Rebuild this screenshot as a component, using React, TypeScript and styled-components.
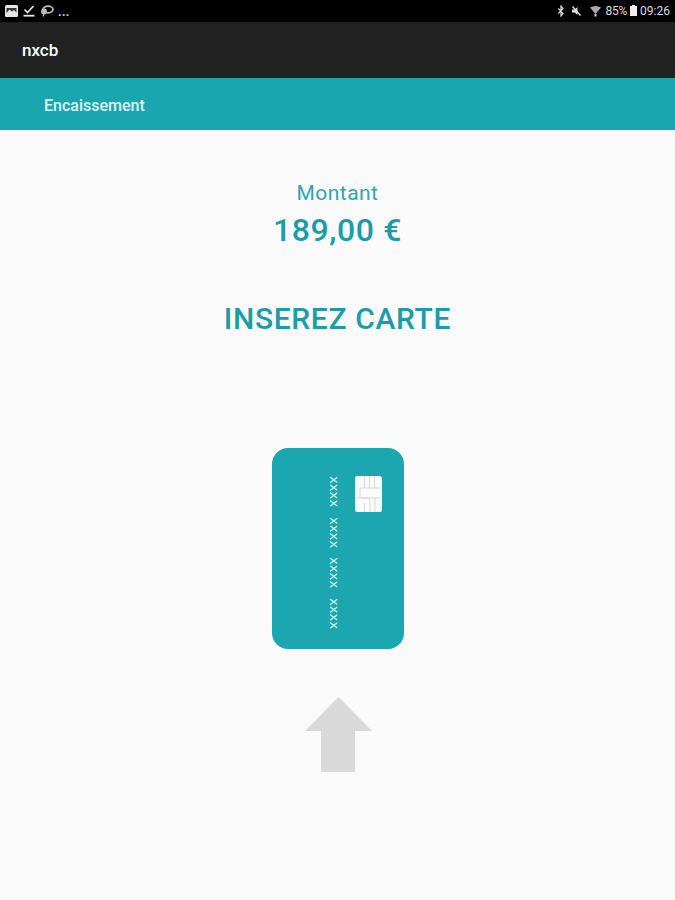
import styled, {createGlobalStyle} from 'styled-components';

const GlobalStyle = createGlobalStyle`
  html, body {
    margin: 0;
    padding: 0;
    background: #fafafa;
  }
  body {
    font-family: Roboto, "Liberation Sans", sans-serif;
  }
`;

const Page = styled.div`
  width: 675px;
  height: 900px;
  display: flex;
  flex-direction: column;
  overflow: hidden;
  background: #fafafa;
`;

const StatusBar = styled.div`
  height: 22px;
  flex: none;
  background: #000;
  color: #dcdcdc;
  display: flex;
  align-items: center;
  justify-content: space-between;
  padding: 0 5px 1px 5px;
  box-sizing: border-box;
  font-size: 12px;
`;

const StatusGroup = styled.div<{$gap: number}>`
  display: flex;
  align-items: center;
  gap: ${p => p.$gap}px;
`;

const Glyph = styled.svg<{$after?: number}>`
  display: block;
  margin-right: ${p => p.$after || 0}px;
`;

const Dots = styled.span`
  font-size: 12px;
  font-weight: 700;
  letter-spacing: 0.4px;
  color: #ddd;
  margin: 2px 0 0 -1px;
`;

const Battery = styled.span`
  letter-spacing: -0.2px;
  margin-left: 1px;
`;

const Toolbar = styled.div`
  height: 56px;
  flex: none;
  background: #212121;
  color: #fff;
  display: flex;
  align-items: center;
  padding-left: 22px;
  font-size: 17px;
  font-weight: 500;
`;

const TabBar = styled.div`
  height: 52px;
  flex: none;
  background: #1aa6af;
  color: #dff4f5;
  display: flex;
  align-items: center;
  padding: 2px 0 0 44px;
  box-sizing: border-box;
  font-size: 16px;
  font-weight: 500;
`;

const Main = styled.main`
  flex: 1;
  display: flex;
  flex-direction: column;
  align-items: center;
  padding-top: 51px;
  color: #1b9ca6;
`;

const Label = styled.div`
  font-size: 21px;
  line-height: 24px;
  letter-spacing: 0.45px;
  color: #2fa6af;
`;

const Amount = styled.div`
  font-size: 32px;
  line-height: 36px;
  font-weight: 500;
  margin-top: 7px;
  letter-spacing: 0.6px;
`;

const Prompt = styled.div`
  font-size: 30px;
  line-height: 36px;
  font-weight: 500;
  margin-top: 53px;
  letter-spacing: 0.65px;
`;

const Card = styled.div`
  width: 132px;
  height: 201px;
  margin-top: 111px;
  box-sizing: border-box;
  background: #1ca6af;
  border-radius: 16px;
  display: flex;
  justify-content: flex-end;
  align-items: flex-start;
  gap: 16px;
  padding: 28px 22px 0 0;
`;

const CardNumber = styled.div`
  writing-mode: vertical-rl;
  color: #eef9fa;
  font-family: "Liberation Mono", monospace;
  font-size: 13px;
  line-height: 11px;
  height: 153px;
  display: flex;
  justify-content: space-between;
`;

const Arrow = styled.svg`
  margin: 48px 0 0 1px;
  display: block;
`;

const App = () => {
  return (
    <Page>
      <GlobalStyle/>
      <StatusBar>
        <StatusGroup $gap={5}>
          <Glyph width="13" height="12" viewBox="0 0 13 12">
            <rect width="13" height="12" rx="1.5" fill="#e6e6e6"/>
            <path d="M1.5 8 L4.5 4.5 L7 6.5 L9 5 L11.5 7.5 V3 H1.5Z" fill="#333"/>
          </Glyph>
          <Glyph width="12" height="12" viewBox="0 0 12 12">
            <path d="M1.5 4.5 L4.5 7.5 L10.5 1" fill="none" stroke="#e6e6e6" strokeWidth="1.7"/>
            <rect x="0.5" y="9.8" width="11" height="1.8" fill="#e6e6e6"/>
          </Glyph>
          <Glyph width="14" height="12" viewBox="0 0 14 12">
            <ellipse cx="8" cy="4.5" rx="5" ry="3.3" fill="none" stroke="#bbb" strokeWidth="1.7"/>
            <circle cx="4" cy="6.5" r="3" fill="#bbb"/>
            <path d="M4 9 L3 11.5" stroke="#bbb" strokeWidth="1.2"/>
          </Glyph>
          <Dots>...</Dots>
        </StatusGroup>
        <StatusGroup $gap={3}>
          <Glyph $after={5} width="6" height="12" viewBox="0 0 6 12">
            <path d="M0.3 3.5 L5 8.5 L3 11 V1 L5 3.5 L0.3 8.5" fill="none" stroke="#ddd" strokeWidth="1.2"/>
          </Glyph>
          <Glyph $after={6} width="9" height="12" viewBox="0 0 9 12">
            <path d="M0 4.5 H2.5 L5.5 2 V10 L2.5 7.5 H0Z" fill="#ddd"/>
            <path d="M0.5 1.5 L8.5 10.5" stroke="#ddd" strokeWidth="1.4"/>
          </Glyph>
          <Glyph width="11" height="12" viewBox="0 0 11 12">
            <path d="M0 2.5 Q5.5 -0.5 11 2.5 L5.5 9Z" fill="#aaa"/>
            <rect x="4.5" y="9" width="2" height="2.5" fill="#ddd"/>
          </Glyph>
          <Battery>85%</Battery>
          <Glyph width="7" height="11" viewBox="0 0 7 11">
            <rect x="0" y="1" width="7" height="10" fill="#eee"/>
            <rect x="2" y="0" width="3" height="1" fill="#eee"/>
          </Glyph>
          <span>09:26</span>
        </StatusGroup>
      </StatusBar>
      <Toolbar>nxcb</Toolbar>
      <TabBar>Encaissement</TabBar>
      <Main>
        <Label>Montant</Label>
        <Amount>189,00 €</Amount>
        <Prompt>INSEREZ CARTE</Prompt>
        <Card>
          <CardNumber>
            <span>xxxx</span>
            <span>xxxx</span>
            <span>xxxx</span>
            <span>xxxx</span>
          </CardNumber>
          <svg width="27" height="36" viewBox="0 0 27 36">
            <rect width="27" height="36" rx="2.5" fill="#fbfbfb"/>
            <path d="M9.5 0 V12 M14.5 0 V12 M19.5 0 V12 M5 12 H27 M5 12 V21 M0 22 H25 M5 22 H14 L15 25 V36 M20 22 V36 M9.5 27 V36" fill="none" stroke="#cfd5d5" strokeWidth="0.9"/>
          </svg>
        </Card>
        <Arrow width="67" height="75" viewBox="0 0 67 75">
          <path d="M33.5 0 L67 34 H50 V75 H16 V34 H0Z" fill="#d9d9d9"/>
        </Arrow>
      </Main>
    </Page>
  );
};

export default App;
